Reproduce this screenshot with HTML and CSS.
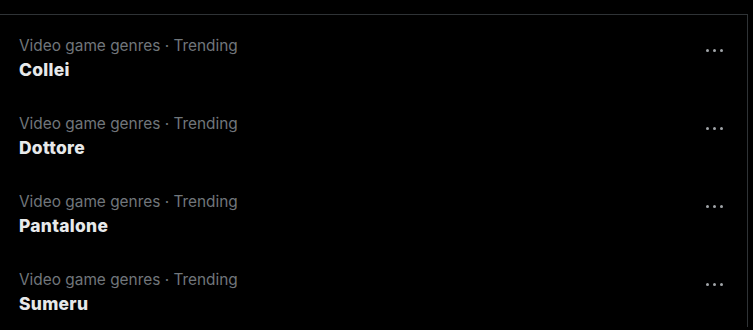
FILE: index.html
```html
<!DOCTYPE html>
<html lang="en">
<head>
    <meta charset="UTF-8">
    <title>Trending</title>
    <link rel="stylesheet" href="styles.css">
</head>
<body>
    <div class="trends">
        <div class="trend">
            <div class="trend-info">
                <span class="trend-meta">Video game genres · Trending</span>
                <span class="trend-name">Collei</span>
            </div>
            <button class="more" aria-label="More"><span></span><span></span><span></span></button>
        </div>
        <div class="trend">
            <div class="trend-info">
                <span class="trend-meta">Video game genres · Trending</span>
                <span class="trend-name">Dottore</span>
            </div>
            <button class="more" aria-label="More"><span></span><span></span><span></span></button>
        </div>
        <div class="trend">
            <div class="trend-info">
                <span class="trend-meta">Video game genres · Trending</span>
                <span class="trend-name">Pantalone</span>
            </div>
            <button class="more" aria-label="More"><span></span><span></span><span></span></button>
        </div>
        <div class="trend">
            <div class="trend-info">
                <span class="trend-meta">Video game genres · Trending</span>
                <span class="trend-name">Sumeru</span>
            </div>
            <button class="more" aria-label="More"><span></span><span></span><span></span></button>
        </div>
    </div>
</body>
</html>
```

FILE: styles.css
```css
body {
    margin: 0;
    padding-top: 14px;
    background: #000;
    font-family: 'Inter', sans-serif;
    overflow: hidden;
}

.trends {
    width: 747px;
    border-top: 1px solid #2f3336;
    border-right: 1px solid #2f3336;
}

.trend {
    display: flex;
    justify-content: space-between;
    align-items: flex-start;
    height: 78px;
    padding: 21px 24px 0 19px;
    box-sizing: border-box;
}

.trend-info {
    display: flex;
    flex-direction: column;
}

.trend-meta {
    color: #71767b;
    font-size: 15.4px;
    line-height: 20px;
}

.trend-name {
    margin-top: 1px;
    color: #e7e9ea;
    font-size: 17.4px;
    font-weight: 800;
    letter-spacing: 0.3px;
    line-height: 25px;
}

.more {
    display: flex;
    gap: 3.5px;
    margin-top: 12.5px;
    padding: 0;
    border: none;
    background: none;
}

.more span {
    width: 3.5px;
    height: 3.5px;
    border-radius: 50%;
    background: #a0a4a8;
}
```
